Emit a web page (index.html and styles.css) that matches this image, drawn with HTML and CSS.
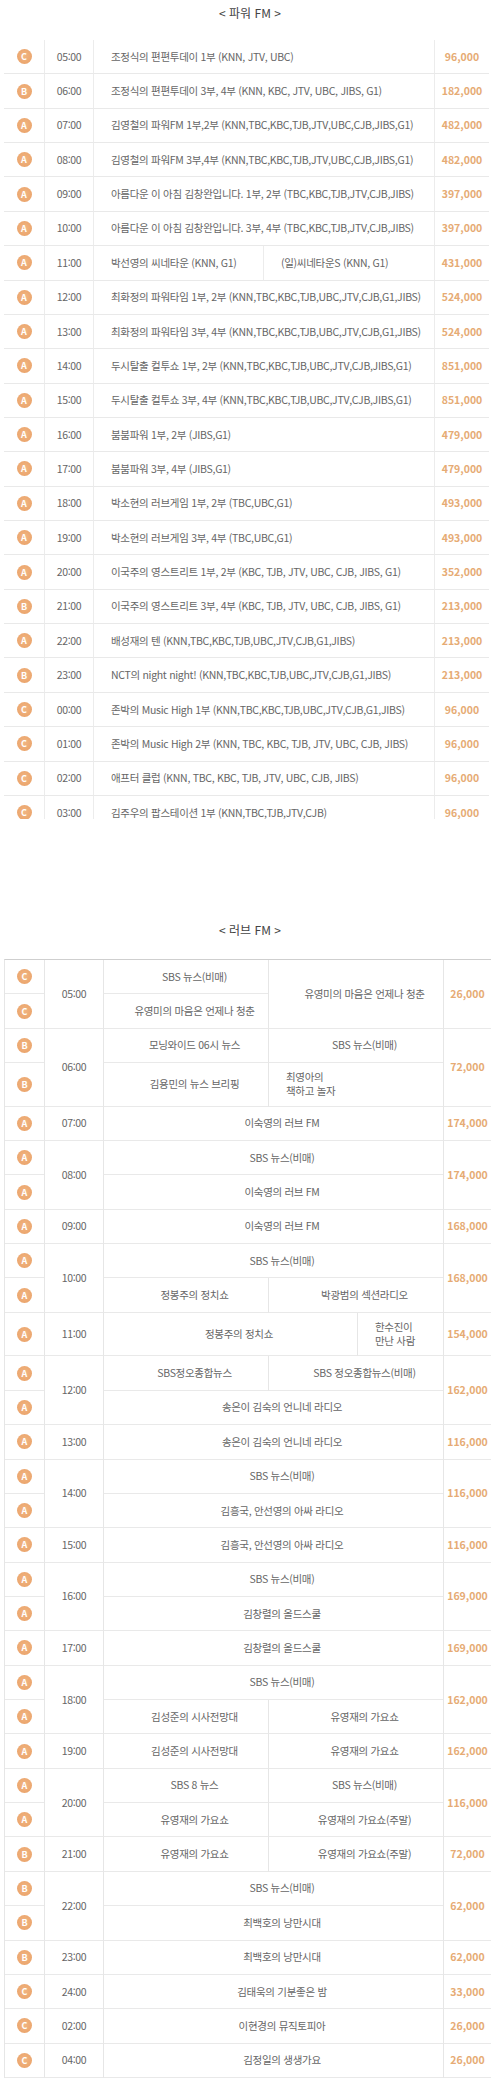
FILE: index.html
```html
<!DOCTYPE html>
<html lang="ko">
<head>
<meta charset="utf-8">
<title>SBS 라디오 광고 단가표</title>
<link rel="stylesheet" href="styles.css">
</head>
<body>
<h2 class="title">&lt; 파워 FM &gt;</h2>
<div class="power">
<table class="grid">
<colgroup><col class="c-badge"><col class="c-ptime"><col class="c-pa"><col class="c-pb"><col class="c-pprice"></colgroup>
<tr><td><span class="badge">C</span></td><td>05:00</td><td class="prog" colspan="2">조정식의 편편투데이 1부 (KNN, JTV, UBC)</td><td class="price">96,000</td></tr>
<tr><td><span class="badge">B</span></td><td>06:00</td><td class="prog" colspan="2">조정식의 편편투데이 3부, 4부 (KNN, KBC, JTV, UBC, JIBS, G1)</td><td class="price">182,000</td></tr>
<tr><td><span class="badge">A</span></td><td>07:00</td><td class="prog" colspan="2">김영철의 파워FM 1부,2부 (KNN,TBC,KBC,TJB,JTV,UBC,CJB,JIBS,G1)</td><td class="price">482,000</td></tr>
<tr><td><span class="badge">A</span></td><td>08:00</td><td class="prog" colspan="2">김영철의 파워FM 3부,4부 (KNN,TBC,KBC,TJB,JTV,UBC,CJB,JIBS,G1)</td><td class="price">482,000</td></tr>
<tr><td><span class="badge">A</span></td><td>09:00</td><td class="prog" colspan="2">아름다운 이 아침 김창완입니다. 1부, 2부 (TBC,KBC,TJB,JTV,CJB,JIBS)</td><td class="price">397,000</td></tr>
<tr><td><span class="badge">A</span></td><td>10:00</td><td class="prog" colspan="2">아름다운 이 아침 김창완입니다. 3부, 4부 (TBC,KBC,TJB,JTV,CJB,JIBS)</td><td class="price">397,000</td></tr>
<tr><td><span class="badge">A</span></td><td>11:00</td><td class="prog">박선영의 씨네타운 (KNN, G1)</td><td class="prog">(일)씨네타운S (KNN, G1)</td><td class="price">431,000</td></tr>
<tr><td><span class="badge">A</span></td><td>12:00</td><td class="prog" colspan="2">최화정의 파워타임 1부, 2부 (KNN,TBC,KBC,TJB,UBC,JTV,CJB,G1,JIBS)</td><td class="price">524,000</td></tr>
<tr><td><span class="badge">A</span></td><td>13:00</td><td class="prog" colspan="2">최화정의 파워타임 3부, 4부 (KNN,TBC,KBC,TJB,UBC,JTV,CJB,G1,JIBS)</td><td class="price">524,000</td></tr>
<tr><td><span class="badge">A</span></td><td>14:00</td><td class="prog" colspan="2">두시탈출 컬투쇼 1부, 2부 (KNN,TBC,KBC,TJB,UBC,JTV,CJB,JIBS,G1)</td><td class="price">851,000</td></tr>
<tr><td><span class="badge">A</span></td><td>15:00</td><td class="prog" colspan="2">두시탈출 컬투쇼 3부, 4부 (KNN,TBC,KBC,TJB,UBC,JTV,CJB,JIBS,G1)</td><td class="price">851,000</td></tr>
<tr><td><span class="badge">A</span></td><td>16:00</td><td class="prog" colspan="2">붐붐파워 1부, 2부 (JIBS,G1)</td><td class="price">479,000</td></tr>
<tr><td><span class="badge">A</span></td><td>17:00</td><td class="prog" colspan="2">붐붐파워 3부, 4부 (JIBS,G1)</td><td class="price">479,000</td></tr>
<tr><td><span class="badge">A</span></td><td>18:00</td><td class="prog" colspan="2">박소현의 러브게임 1부, 2부 (TBC,UBC,G1)</td><td class="price">493,000</td></tr>
<tr><td><span class="badge">A</span></td><td>19:00</td><td class="prog" colspan="2">박소현의 러브게임 3부, 4부 (TBC,UBC,G1)</td><td class="price">493,000</td></tr>
<tr><td><span class="badge">A</span></td><td>20:00</td><td class="prog" colspan="2">이국주의 영스트리트 1부, 2부 (KBC, TJB, JTV, UBC, CJB, JIBS, G1)</td><td class="price">352,000</td></tr>
<tr><td><span class="badge">B</span></td><td>21:00</td><td class="prog" colspan="2">이국주의 영스트리트 3부, 4부 (KBC, TJB, JTV, UBC, CJB, JIBS, G1)</td><td class="price">213,000</td></tr>
<tr><td><span class="badge">A</span></td><td>22:00</td><td class="prog" colspan="2">배성재의 텐 (KNN,TBC,KBC,TJB,UBC,JTV,CJB,G1,JIBS)</td><td class="price">213,000</td></tr>
<tr><td><span class="badge">B</span></td><td>23:00</td><td class="prog" colspan="2">NCT의 night night! (KNN,TBC,KBC,TJB,UBC,JTV,CJB,G1,JIBS)</td><td class="price">213,000</td></tr>
<tr><td><span class="badge">C</span></td><td>00:00</td><td class="prog" colspan="2">존박의 Music High 1부 (KNN,TBC,KBC,TJB,UBC,JTV,CJB,G1,JIBS)</td><td class="price">96,000</td></tr>
<tr><td><span class="badge">C</span></td><td>01:00</td><td class="prog" colspan="2">존박의 Music High 2부 (KNN, TBC, KBC, TJB, JTV, UBC, CJB, JIBS)</td><td class="price">96,000</td></tr>
<tr><td><span class="badge">C</span></td><td>02:00</td><td class="prog" colspan="2">애프터 클럽 (KNN, TBC, KBC, TJB, JTV, UBC, CJB, JIBS)</td><td class="price">96,000</td></tr>
<tr><td><span class="badge">C</span></td><td>03:00</td><td class="prog" colspan="2">김주우의 팝스테이션 1부 (KNN,TBC,TJB,JTV,CJB)</td><td class="price">96,000</td></tr>
</table>
</div>

<h2 class="title love-title">&lt; 러브 FM &gt;</h2>
<div class="love">
<table class="grid">
<colgroup><col class="c-badge"><col class="c-ltime"><col class="c-l1"><col class="c-l2"><col class="c-l3"><col class="c-lprice"></colgroup>
<tr><td><span class="badge">C</span></td><td rowspan="2">05:00</td><td class="lp">SBS 뉴스(비매)</td><td class="lp" colspan="2" rowspan="2">유영미의 마음은 언제나 청춘</td><td class="price" rowspan="2">26,000</td></tr>
<tr><td><span class="badge">C</span></td><td class="lp">유영미의 마음은 언제나 청춘</td></tr>
<tr><td><span class="badge">B</span></td><td rowspan="2">06:00</td><td class="lp">모닝와이드 06시 뉴스</td><td class="lp" colspan="2">SBS 뉴스(비매)</td><td class="price" rowspan="2">72,000</td></tr>
<tr class="tall"><td><span class="badge">B</span></td><td class="lp">김용민의 뉴스 브리핑</td><td class="lp left" colspan="2">최영아의<br>책하고 놀자</td></tr>
<tr><td><span class="badge">A</span></td><td>07:00</td><td class="lp" colspan="3">이숙영의 러브 FM</td><td class="price">174,000</td></tr>
<tr><td><span class="badge">A</span></td><td rowspan="2">08:00</td><td class="lp" colspan="3">SBS 뉴스(비매)</td><td class="price" rowspan="2">174,000</td></tr>
<tr><td><span class="badge">A</span></td><td class="lp" colspan="3">이숙영의 러브 FM</td></tr>
<tr><td><span class="badge">A</span></td><td>09:00</td><td class="lp" colspan="3">이숙영의 러브 FM</td><td class="price">168,000</td></tr>
<tr><td><span class="badge">A</span></td><td rowspan="2">10:00</td><td class="lp" colspan="3">SBS 뉴스(비매)</td><td class="price" rowspan="2">168,000</td></tr>
<tr><td><span class="badge">A</span></td><td class="lp">정봉주의 정치쇼</td><td class="lp" colspan="2">박광범의 섹션라디오</td></tr>
<tr class="tall"><td><span class="badge">A</span></td><td>11:00</td><td class="lp" colspan="2">정봉주의 정치쇼</td><td class="lp left">한수진이<br>만난 사람</td><td class="price">154,000</td></tr>
<tr><td><span class="badge">A</span></td><td rowspan="2">12:00</td><td class="lp">SBS정오종합뉴스</td><td class="lp" colspan="2">SBS 정오종합뉴스(비매)</td><td class="price" rowspan="2">162,000</td></tr>
<tr><td><span class="badge">A</span></td><td class="lp" colspan="3">송은이 김숙의 언니네 라디오</td></tr>
<tr><td><span class="badge">A</span></td><td>13:00</td><td class="lp" colspan="3">송은이 김숙의 언니네 라디오</td><td class="price">116,000</td></tr>
<tr><td><span class="badge">A</span></td><td rowspan="2">14:00</td><td class="lp" colspan="3">SBS 뉴스(비매)</td><td class="price" rowspan="2">116,000</td></tr>
<tr><td><span class="badge">A</span></td><td class="lp" colspan="3">김흥국, 안선영의 아싸 라디오</td></tr>
<tr><td><span class="badge">A</span></td><td>15:00</td><td class="lp" colspan="3">김흥국, 안선영의 아싸 라디오</td><td class="price">116,000</td></tr>
<tr><td><span class="badge">A</span></td><td rowspan="2">16:00</td><td class="lp" colspan="3">SBS 뉴스(비매)</td><td class="price" rowspan="2">169,000</td></tr>
<tr><td><span class="badge">A</span></td><td class="lp" colspan="3">김창렬의 올드스쿨</td></tr>
<tr><td><span class="badge">A</span></td><td>17:00</td><td class="lp" colspan="3">김창렬의 올드스쿨</td><td class="price">169,000</td></tr>
<tr><td><span class="badge">A</span></td><td rowspan="2">18:00</td><td class="lp" colspan="3">SBS 뉴스(비매)</td><td class="price" rowspan="2">162,000</td></tr>
<tr><td><span class="badge">A</span></td><td class="lp">김성준의 시사전망대</td><td class="lp" colspan="2">유영재의 가요쇼</td></tr>
<tr><td><span class="badge">A</span></td><td>19:00</td><td class="lp">김성준의 시사전망대</td><td class="lp" colspan="2">유영재의 가요쇼</td><td class="price">162,000</td></tr>
<tr><td><span class="badge">A</span></td><td rowspan="2">20:00</td><td class="lp">SBS 8 뉴스</td><td class="lp" colspan="2">SBS 뉴스(비매)</td><td class="price" rowspan="2">116,000</td></tr>
<tr><td><span class="badge">A</span></td><td class="lp">유영재의 가요쇼</td><td class="lp" colspan="2">유영재의 가요쇼(주말)</td></tr>
<tr><td><span class="badge">B</span></td><td>21:00</td><td class="lp">유영재의 가요쇼</td><td class="lp" colspan="2">유영재의 가요쇼(주말)</td><td class="price">72,000</td></tr>
<tr><td><span class="badge">B</span></td><td rowspan="2">22:00</td><td class="lp" colspan="3">SBS 뉴스(비매)</td><td class="price" rowspan="2">62,000</td></tr>
<tr><td><span class="badge">B</span></td><td class="lp" colspan="3">최백호의 낭만시대</td></tr>
<tr><td><span class="badge">B</span></td><td>23:00</td><td class="lp" colspan="3">최백호의 낭만시대</td><td class="price">62,000</td></tr>
<tr><td><span class="badge">C</span></td><td>24:00</td><td class="lp" colspan="3">김태욱의 기분좋은 밤</td><td class="price">33,000</td></tr>
<tr><td><span class="badge">C</span></td><td>02:00</td><td class="lp" colspan="3">이현경의 뮤직토피아</td><td class="price">26,000</td></tr>
<tr><td><span class="badge">C</span></td><td>04:00</td><td class="lp" colspan="3">김정일의 생생가요</td><td class="price">26,000</td></tr>
</table>
</div>
</body>
</html>
```

FILE: styles.css
```css
html, body {
  margin: 0;
  padding: 0;
  background: #fff;
}

body {
  font-family: "Noto Sans CJK KR", "Noto Sans", sans-serif;
  font-size: 10.5px;
  letter-spacing: -0.3px;
  color: #666;
}

.title {
  margin: 0;
  height: 26px;
  line-height: 26px;
  text-align: center;
  font-size: 12px;
  letter-spacing: 0;
  font-weight: normal;
  color: #444;
}

.love-title {
  margin-top: 98px;
}

.power {
  margin: 14px 0 0 4px;
  width: 485px;
  height: 779px;
  overflow: hidden;
}

.love {
  margin: 16px 0 0 4px;
  width: 487px;
}

.grid {
  width: 100%;
  table-layout: fixed;
  border-collapse: separate;
  border-spacing: 0;
}

.grid tr {
  height: 34.37px;
}

.grid tr.tall {
  height: 43.6px;
}

.grid td {
  box-sizing: border-box;
  padding: 0;
  border-bottom: 1px solid #e9e9e9;
  text-align: center;
  vertical-align: middle;
  white-space: nowrap;
  line-height: 14px;
}

.power td + td {
  border-left: 1px solid #ececec;
}

.c-badge { width: 40px; }
.c-ptime { width: 49px; }
.c-pa { width: 170px; }
.c-pb { width: 171px; }
.c-pprice { width: 55px; }

.power .prog {
  text-align: left;
  padding-left: 17px;
}

.love .grid {
  border-top: 1px solid #cfcfcf;
  border-left: 1px solid #e6e6e6;
}

.love td {
  border-left: 1px solid #e6e6e6;
}

.love td:first-child {
  border-left: 0;
}

.c-ltime { width: 59px; }
.c-l1 { width: 165px; }
.c-l2 { width: 89px; }
.c-l3 { width: 86px; }
.c-lprice { width: 48px; }

.love .c-badge { width: 39px; }

.lp {
  padding-left: 17px !important;
}

.lp.left {
  text-align: left;
}

.price {
  color: #e6ab74;
  font-weight: bold;
  letter-spacing: 0;
}

.badge {
  display: flex;
  align-items: center;
  justify-content: center;
  width: 15px;
  height: 15px;
  margin: 0 auto;
  border-radius: 50%;
  background: radial-gradient(circle at 50% 45%, #f1b582 0%, #e9a066 100%);
  color: #fff;
  font-size: 9px;
  letter-spacing: 0;
  font-weight: bold;
  line-height: 1;
}
```
